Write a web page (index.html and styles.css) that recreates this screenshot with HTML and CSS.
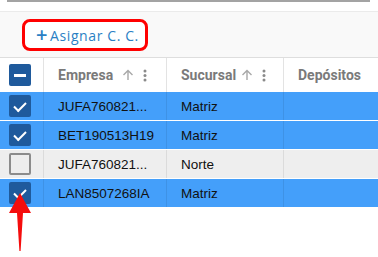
FILE: index.html
```html
<!DOCTYPE html>
<html lang="es">
<head>
    <meta charset="UTF-8">
    <title>Asignar C. C.</title>
    <link rel="stylesheet" href="styles.css">
</head>
<body>

    <div class="top-line"></div>

    <div class="toolbar">
        <div class="highlight">
            <button class="add-btn"><span class="plus">+</span>Asignar C. C.</button>
        </div>
    </div>

    <div class="grid">
        <div class="row head">
            <div class="cell check"><span class="box minus"></span></div>
            <div class="cell">Empresa
                <svg class="sort" width="12" height="12" viewBox="0 0 12 12"><path d="M6 11V1.5M1.5 6L6 1.5L10.5 6" fill="none" stroke="#a8a8a8" stroke-width="1.4"/></svg>
                <svg class="menu" width="4" height="13" viewBox="0 0 4 13"><circle cx="2" cy="2" r="1.5"/><circle cx="2" cy="6.5" r="1.5"/><circle cx="2" cy="11" r="1.5"/></svg>
            </div>
            <div class="cell">Sucursal
                <svg class="sort near" width="12" height="12" viewBox="0 0 12 12"><path d="M6 11V1.5M1.5 6L6 1.5L10.5 6" fill="none" stroke="#a8a8a8" stroke-width="1.4"/></svg>
                <svg class="menu" width="4" height="13" viewBox="0 0 4 13"><circle cx="2" cy="2" r="1.5"/><circle cx="2" cy="6.5" r="1.5"/><circle cx="2" cy="11" r="1.5"/></svg>
            </div>
            <div class="cell">Depósitos</div>
        </div>
        <div class="row selected">
            <div class="cell check"><span class="box checked"></span></div>
            <div class="cell">JUFA760821...</div>
            <div class="cell">Matriz</div>
            <div class="cell"></div>
        </div>
        <div class="row selected">
            <div class="cell check"><span class="box checked"></span></div>
            <div class="cell">BET190513H19</div>
            <div class="cell">Matriz</div>
            <div class="cell"></div>
        </div>
        <div class="row plain">
            <div class="cell check"><span class="box"></span></div>
            <div class="cell">JUFA760821...</div>
            <div class="cell">Norte</div>
            <div class="cell"></div>
        </div>
        <div class="row selected">
            <div class="cell check"><span class="box checked"></span></div>
            <div class="cell">LAN8507268IA</div>
            <div class="cell">Matriz</div>
            <div class="cell"></div>
        </div>

        <!-- flecha de señalamiento -->
        <svg class="arrow" width="24" height="62" viewBox="0 0 24 62">
            <path d="M12 0 L23 20 L15 20 L12.6 58 L11.4 58 L9 20 L1 20 Z" fill="#f50d0d"/>
        </svg>
    </div>

</body>
</html>
```

FILE: styles.css
```css
body {
    margin: 0;
    background: #fff;
    font-family: "Liberation Sans", Arial, sans-serif;
    width: 378px;
    height: 257px;
    overflow: hidden;
}

.top-line {
    margin: 0 8px 0 7px;
    border-top: 2px solid #a3a3a3;
}

.toolbar {
    margin-top: 9px;
    height: 47px;
    background: #f9f9f9;
    border-top: 1px solid #ebebeb;
    border-bottom: 1px solid #dedede;
    padding: 7px 0 0 22px;
    box-sizing: border-box;
}

.highlight {
    display: inline-block;
    border: 3px solid #f00;
    border-radius: 8px;
    background: #fff;
    padding: 0 6px 0 11px;
    height: 32px;
    box-sizing: border-box;
}

.add-btn {
    border: none;
    background: none;
    padding: 0;
    height: 26px;
    font-family: "Open Sans", sans-serif;
    font-size: 14px;
    color: #2a7fc4;
    letter-spacing: 0.6px;
    display: flex;
    align-items: center;
    cursor: pointer;
}

.plus {
    font-size: 20px;
    font-weight: 600;
    margin-right: 2px;
    margin-top: -2px;
}

.grid {
    position: relative;
}

.row {
    display: grid;
    grid-template-columns: 44px 123px 117px 1fr;
    height: 28px;
    border-bottom: 1px solid #fff;
    font-size: 13.5px;
    color: #111;
}

.row .cell {
    display: flex;
    align-items: center;
    padding-left: 14px;
    border-right: 1px solid rgba(0, 0, 0, 0.08);
}

.row .cell:last-child {
    border-right: none;
}

.row .cell.check {
    padding-left: 9px;
}

.head {
    height: 34px;
    border-bottom: none;
    font-family: Roboto, sans-serif;
    font-size: 14px;
    font-weight: 700;
    color: #7a7a7a;
}

.head .cell {
    border-right: 1px solid #e3e3e3;
}

.sort {
    margin-left: 9px;
}

.sort.near {
    margin-left: 5px;
}

.menu {
    fill: #8a8a8a;
    margin-left: 9px;
}

.selected {
    background: #449ffa;
}

.plain {
    background: #eeeeee;
}

.box {
    width: 18px;
    height: 18px;
    border: 2px solid #8c8c8c;
    border-radius: 2px;
    box-sizing: content-box;
    position: relative;
}

.box.checked,
.box.minus {
    background: #1f5a9c;
    border-color: #1f5a9c;
}

.box.minus::after {
    content: "";
    position: absolute;
    left: 3px;
    right: 3px;
    top: 8px;
    height: 3px;
    background: #fff;
}

.box.checked::after {
    content: "";
    position: absolute;
    width: 10px;
    height: 5px;
    border-left: 2.5px solid #fff;
    border-bottom: 2.5px solid #fff;
    transform: rotate(-45deg);
    top: 5px;
    left: 3px;
}

.arrow {
    position: absolute;
    left: 8px;
    top: 135px;
}
```
